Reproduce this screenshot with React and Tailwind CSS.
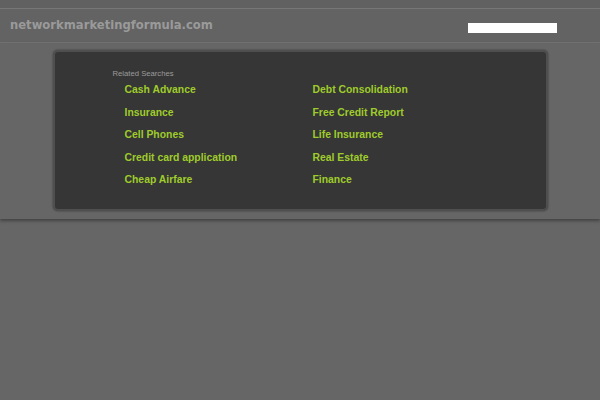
import React from 'react';

const leftLinks = ['Cash Advance', 'Insurance', 'Cell Phones', 'Credit card application', 'Cheap Airfare'];
const rightLinks = ['Debt Consolidation', 'Free Credit Report', 'Life Insurance', 'Real Estate', 'Finance'];

export default function App() {
    return (
        <div className="min-h-[400px] bg-[#666666]">
            {/* top strip */}
            <div className="h-[9px] bg-[#616161] border-b border-[#777777]" />

            {/* header */}
            <div className="h-[34px] bg-[#636363] border-b border-[#727272] flex items-center justify-between pl-[10px] pr-[43px]">
                <div className="font-['DejaVu_Sans',sans-serif] font-bold text-[11.6px] text-[#9a9a9a]">
                    networkmarketingformula.com
                </div>
                <div className="w-[89px] h-[10px] bg-white mt-[4px]" />
            </div>

            {/* content band */}
            <div className="relative bg-[#666666] pt-[7px] pb-[8px] shadow-[0_2px_3px_rgba(0,0,0,0.35)]">
                <div className="mx-auto w-[495px] h-[161px] rounded-[5px] bg-[#363636] border-2 border-[#4f4f4f] shadow-[0_0_2px_rgba(0,0,0,0.5)] pt-[17px] pl-[58px] font-['Liberation_Sans',Arial,sans-serif]">
                    <div className="text-[7.7px] leading-[9px] text-[#9b9b9b]">Related Searches</div>
                    <div className="grid grid-cols-[188px_1fr] pl-[12px] mt-[1px]">
                        <div className="flex flex-col">
                            {leftLinks.map((l) => (
                                <a key={l} className="text-[10.4px] leading-[22.5px] font-bold text-[#9fcc2c]">{l}</a>
                            ))}
                        </div>
                        <div className="flex flex-col">
                            {rightLinks.map((l) => (
                                <a key={l} className="text-[10.4px] leading-[22.5px] font-bold text-[#9fcc2c]">{l}</a>
                            ))}
                        </div>
                    </div>
                </div>
            </div>
        </div>
    );
}
